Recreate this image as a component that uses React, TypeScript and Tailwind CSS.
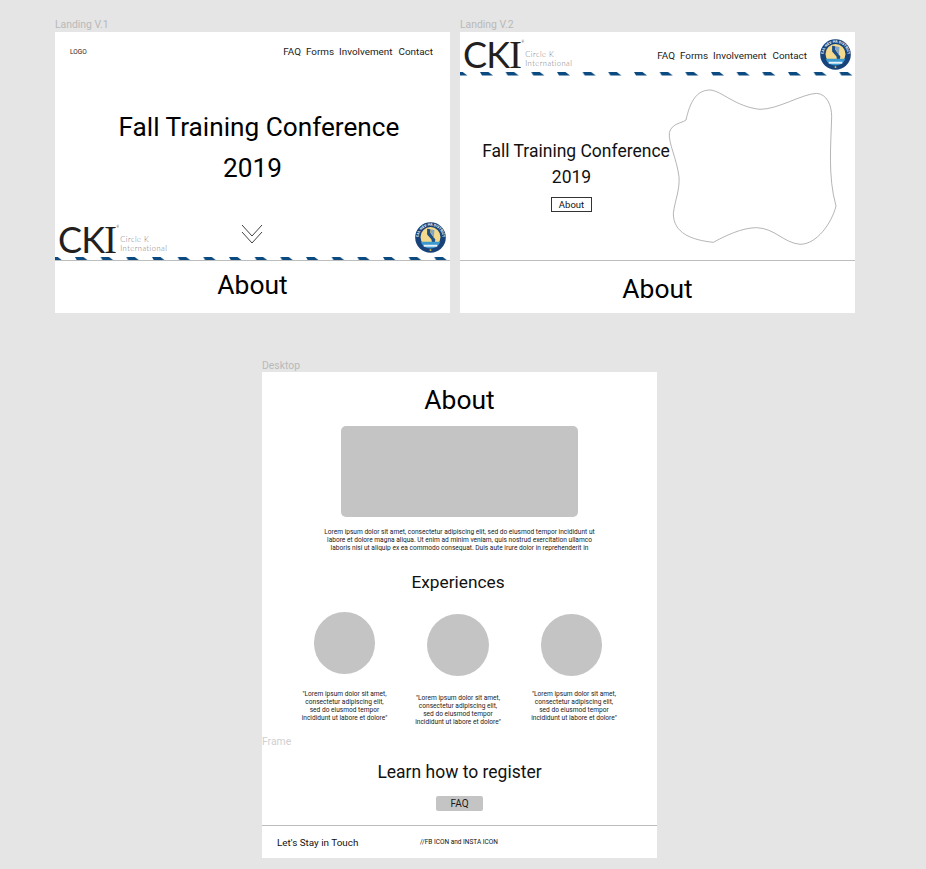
const lorem =
  '"Lorem ipsum dolor sit amet, consectetur adipiscing elit, sed do eiusmod tempor incididunt ut labore et dolore"';

function NavLinks() {
  return (
    <nav className="flex items-center gap-[5px] text-[9.9px] leading-none text-[#1a1a1a]">
      <span>FAQ</span>
      <span>Forms</span>
      <span>Involvement</span>
      <span className="ml-[1px]">Contact</span>
    </nav>
  );
}

function CkiLogo() {
  return (
    <div className="flex items-end font-['Lato',sans-serif]">
      <span className="relative text-[36px] leading-[27px] tracking-[-0.9px] text-[#231f20]">
        CK
        <span className="font-['Liberation_Serif',serif] text-[39px]">I</span>
        <span className="absolute -right-[2px] top-0 text-[3px] leading-[3px]">®</span>
      </span>
      <span className="ml-[4px] text-[7.5px] leading-[9px] font-light tracking-[0.5px] text-[#77787b]">
        Circle K
        <br />
        International
      </span>
    </div>
  );
}

function Seal() {
  return (
    <svg className="mb-[2px] shrink-0" width="31" height="31" viewBox="0 0 32 32">
      <defs>
        <path id="sealArc" d="M4.2 20 A12.4 12.4 0 1 1 27.8 20" />
      </defs>
      <circle cx="16" cy="16" r="15.8" fill="#17437a" />
      <circle cx="16" cy="15.5" r="10.3" fill="#f3d98b" />
      <path d="M12.5 7 L16 7.5 L15.8 11 L21 18 L20.5 21 L17.5 21 L17 18 L12.5 13 Z" fill="#1c4f86" />
      <path d="M16.5 7.8 L20 8.2 L19.5 16.5 L16.5 11 Z" fill="#7fa6c9" />
      <path d="M5.8 20.5 H26.2 A11 11 0 0 1 5.8 20.5 Z" fill="#3a9ad0" />
      <path d="M9 23.5 H23 V25.5 H9 Z" fill="#e8f1f7" />
      <circle cx="16" cy="29" r="1" fill="#f3c93f" />
      <text fontSize="3.6" fontWeight="700" fill="#ffffff" fontFamily="Roboto, sans-serif">
        <textPath href="#sealArc" startOffset="50%" textAnchor="middle">
          CAL-NEV-HA DISTRICT
        </textPath>
      </text>
    </svg>
  );
}

function DashStripe({ id }: { id: string }) {
  return (
    <svg className="block w-full" height="4" viewBox="0 0 395 4">
      <defs>
        <pattern id={id} x="-5.67" width="25.67" height="4" patternUnits="userSpaceOnUse">
          <polygon points="0,0 8.5,0 13,3.6 2,3.6" fill="#0b4a80" />
        </pattern>
      </defs>
      <rect width="395" height="4" fill={`url(#${id})`} />
    </svg>
  );
}

function LandingOne() {
  return (
    <section className="flex h-[281px] w-[395px] flex-col bg-white">
      <header className="flex h-[40px] shrink-0 items-center justify-between pl-[15px] pr-[17px]">
        <span className="text-[6.5px] leading-none text-[#1a1a1a]">LOGO</span>
        <NavLinks />
      </header>
      <h1 className="mt-[35px] flex flex-col items-center text-[26.2px] leading-[41px] font-normal text-black">
        <span className="ml-[13px] whitespace-nowrap">Fall Training Conference</span>
        <span>2019</span>
      </h1>
      <div className="relative mt-[35px] flex h-[31px] shrink-0 items-end justify-between pl-[3px] pr-[4px]">
        <div className="mb-[2px]">
          <CkiLogo />
        </div>
        <svg className="absolute left-[186px] top-0" width="22" height="20" viewBox="0 0 22 20" fill="none" stroke="#111" strokeWidth="0.8">
          <path d="M1 1 L11 12 L21 1" />
          <path d="M1 8 L11 19 L21 8" />
        </svg>
        <Seal />
      </div>
      <div className="mt-[2px] -mb-[1px]">
        <DashStripe id="dashOne" />
      </div>
      <div className="relative border-t border-[#bdbdbd]" />
      <h2 className="mt-[8px] text-center text-[26.4px] leading-[32px] font-normal text-black">About</h2>
    </section>
  );
}

function LandingTwo() {
  return (
    <section className="flex h-[281px] w-[395px] flex-col bg-white">
      <header className="flex h-[40px] shrink-0 items-end justify-between pl-[3px] pr-[4px]">
        <div className="mb-[4px]">
          <CkiLogo />
        </div>
        <div className="flex items-end gap-[13px]">
          <div className="mb-[11px]">
            <NavLinks />
          </div>
          <Seal />
        </div>
      </header>
      <DashStripe id="dashTwo" />
      <div className="relative flex h-[185px] shrink-0 border-b border-[#bdbdbd]">
        <div className="ml-[17.5px] mt-[62px] flex w-[188px] flex-col items-center">
          <h1 className="flex flex-col items-center text-[17.5px] leading-[26px] font-normal text-[#111]">
            <span className="ml-[9px] whitespace-nowrap">Fall Training Conference</span>
            <span>2019</span>
          </h1>
          <span className="mt-[7px] flex h-[15px] w-[41px] items-center justify-center border border-[#333] text-[9.5px] leading-none text-[#111]">
            About
          </span>
        </div>
        <svg className="absolute -left-[5px] -top-[66px]" width="410" height="310" viewBox="0 0 1230 930" fill="none" stroke="#8f8f8f" strokeWidth="2">
          <path d="M693 330 C705 275 725 240 765 240 C800 242 840 290 915 298 C970 298 1040 252 1085 250 C1115 252 1130 285 1130 320 C1128 400 1118 500 1143 588 C1130 640 1085 703 1035 703 C985 698 960 655 905 653 C860 653 810 678 775 697 C710 690 655 670 655 610 C660 570 675 540 672 500 C665 445 640 400 643 368 C650 340 680 340 693 330 Z" />
        </svg>
      </div>
      <h2 className="mt-[12px] text-center text-[26.4px] leading-[32px] font-normal text-black">About</h2>
    </section>
  );
}

function Testimonial({ imageTop, textTop }: { imageTop: string; textTop: string }) {
  return (
    <div className={`flex w-[113.5px] flex-col items-center ${imageTop}`}>
      <div className="h-[61.5px] w-[61.5px] rounded-full bg-[#c4c4c4]" />
      <p className={`w-[88px] text-center text-[6.6px] leading-[8px] text-[#1a1a1a] ${textTop}`}>{lorem}</p>
    </div>
  );
}

function DesktopFrame() {
  return (
    <section className="flex h-[486px] w-[395px] flex-col items-center bg-white">
      <h2 className="mt-[12px] text-center text-[26.4px] leading-[32px] font-normal text-black">About</h2>
      <div className="mt-[10px] h-[91px] w-[237px] shrink-0 rounded-[5px] bg-[#c4c4c4]" />
      <p className="mt-[11px] w-[280px] text-center text-[6.58px] leading-[8px] text-[#1a1a1a]">
        Lorem ipsum dolor sit amet, consectetur adipiscing elit, sed do eiusmod tempor incididunt ut labore et dolore
        magna aliqua. Ut enim ad minim veniam, quis nostrud exercitation ullamco laboris nisi ut aliquip ex ea commodo
        consequat. Duis aute irure dolor in reprehenderit in
      </p>
      <h3 className="-ml-[3px] mt-[20px] text-[17.3px] leading-[20px] font-normal text-[#111]">Experiences</h3>
      <div className="-ml-[3px] mt-[20px] flex items-start">
        <Testimonial imageTop="" textTop="mt-[16px]" />
        <Testimonial imageTop="mt-[2px]" textTop="mt-[18px]" />
        <Testimonial imageTop="mt-[2px]" textTop="ml-[5px] mt-[14px]" />
      </div>
      <h3 className="mt-[35.5px] text-[17.5px] leading-[22px] font-normal text-[#111]">Learn how to register</h3>
      <button className="mt-[13px] h-[15px] w-[47px] shrink-0 rounded-[2px] bg-[#c4c4c4] text-[10px] leading-[15px] text-[#1a1a1a]">
        FAQ
      </button>
      <footer className="mt-[14px] flex h-[33px] w-full shrink-0 items-center border-t border-[#bdbdbd] pl-[15px] pt-[1px] text-[#111]">
        <span className="w-[143px] text-[9.9px] leading-none">Let's Stay in Touch</span>
        <span className="text-[6.5px] leading-none">//FB ICON and INSTA ICON</span>
      </footer>
    </section>
  );
}

function CanvasLabel({ className, children }: { className: string; children: string }) {
  return <span className={`absolute text-[10.4px] leading-none text-[#b9b9b9] ${className}`}>{children}</span>;
}

export default function App() {
  return (
    <div className="relative h-[869px] w-[926px] overflow-hidden bg-[#e5e5e5] font-['Roboto',sans-serif]">
      <CanvasLabel className="left-[55px] top-[20px]">Landing V.1</CanvasLabel>
      <div className="absolute left-[55px] top-[32px]">
        <LandingOne />
      </div>
      <CanvasLabel className="left-[460px] top-[20px]">Landing V.2</CanvasLabel>
      <div className="absolute left-[460px] top-[32px]">
        <LandingTwo />
      </div>
      <CanvasLabel className="left-[262px] top-[361px]">Desktop</CanvasLabel>
      <div className="absolute left-[262px] top-[372px]">
        <DesktopFrame />
      </div>
      <CanvasLabel className="left-[262px] top-[737px] text-[#d0d0d0]">Frame</CanvasLabel>
    </div>
  );
}
